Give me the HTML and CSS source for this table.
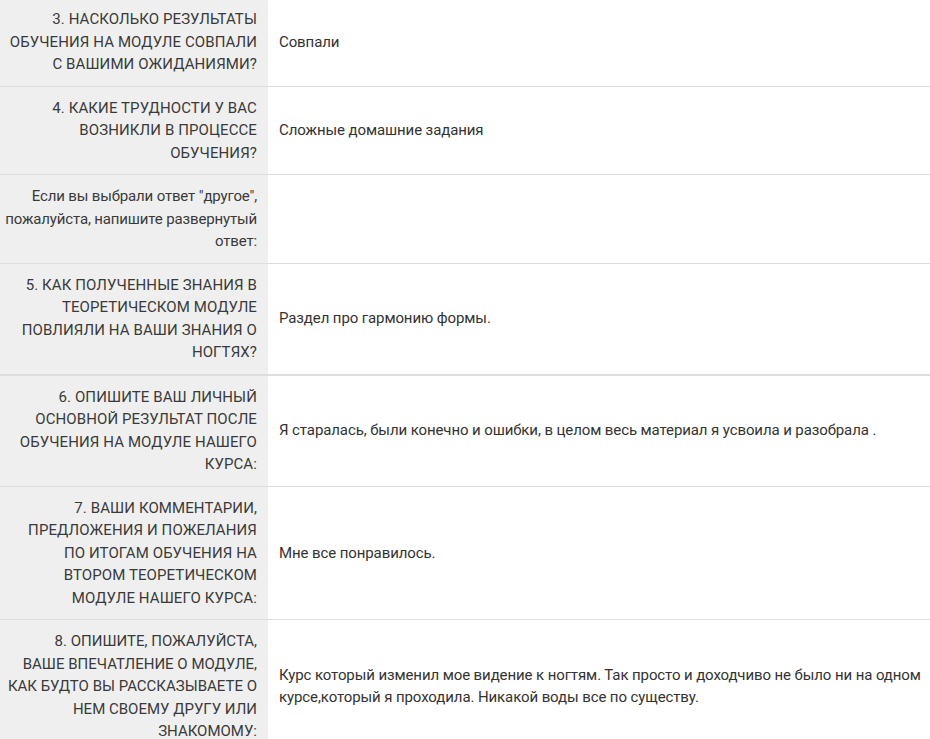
FILE: index.html
```html
<!DOCTYPE html>
<html lang="ru">
<head>
  <meta charset="UTF-8">
  <title>Результаты анкеты</title>
  <link rel="stylesheet" href="styles.css">
</head>
<body>

  <table class="answers">
    <tr>
      <th>3. НАСКОЛЬКО РЕЗУЛЬТАТЫ ОБУЧЕНИЯ НА МОДУЛЕ СОВПАЛИ С ВАШИМИ ОЖИДАНИЯМИ?</th>
      <td>Совпали</td>
    </tr>
    <tr>
      <th>4. КАКИЕ ТРУДНОСТИ У ВАС ВОЗНИКЛИ В ПРОЦЕССЕ ОБУЧЕНИЯ?</th>
      <td>Сложные домашние задания</td>
    </tr>
    <tr>
      <th class="note">Если вы выбрали ответ "другое", пожалуйста, напишите развернутый ответ:</th>
      <td></td>
    </tr>
    <tr class="section-end">
      <th>5. КАК ПОЛУЧЕННЫЕ ЗНАНИЯ В ТЕОРЕТИЧЕСКОМ МОДУЛЕ ПОВЛИЯЛИ НА ВАШИ ЗНАНИЯ О НОГТЯХ?</th>
      <td>Раздел про гармонию формы.</td>
    </tr>
    <tr>
      <th>6. ОПИШИТЕ ВАШ ЛИЧНЫЙ ОСНОВНОЙ РЕЗУЛЬТАТ ПОСЛЕ ОБУЧЕНИЯ НА МОДУЛЕ НАШЕГО КУРСА:</th>
      <td>Я старалась, были конечно и ошибки, в целом весь материал я усвоила и разобрала .</td>
    </tr>
    <tr>
      <th>7. ВАШИ КОММЕНТАРИИ, ПРЕДЛОЖЕНИЯ И ПОЖЕЛАНИЯ ПО ИТОГАМ ОБУЧЕНИЯ НА ВТОРОМ ТЕОРЕТИЧЕСКОМ МОДУЛЕ НАШЕГО КУРСА:</th>
      <td>Мне все понравилось.</td>
    </tr>
    <tr>
      <th class="long">8. ОПИШИТЕ, ПОЖАЛУЙСТА,<br>ВАШЕ ВПЕЧАТЛЕНИЕ О МОДУЛЕ,<br>КАК БУДТО ВЫ РАССКАЗЫВАЕТЕ О НЕМ СВОЕМУ ДРУГУ ИЛИ ЗНАКОМОМУ:</th>
      <td>Курс который изменил мое видение к ногтям. Так просто и доходчиво не было ни на одном курсе,который я проходила. Никакой воды все по существу.</td>
    </tr>
  </table>

</body>
</html>
```

FILE: styles.css
```css
body {
  margin: 0;
  background: #fff;
  font-family: Roboto, Arial, sans-serif;
  font-size: 15px;
  line-height: 1.5;
  color: #333;
}

.answers {
  width: 100%;
  border-collapse: collapse;
  margin-top: -2px;
}

.answers tr {
  border-bottom: 1px solid #dddddd;
}

.answers tr.section-end {
  border-bottom: 2px solid #dddddd;
}

.answers th {
  width: 252px;
  padding: 10px 11px 10px 5px;
  background-color: #efefef;
  text-align: right;
  font-weight: normal;
  letter-spacing: 0.1px;
  color: #3a3a3a;
  vertical-align: middle;
}

.answers th.note {
  letter-spacing: -0.15px;
}

.answers th.long {
  letter-spacing: 0;
}

.answers td {
  padding: 10px 8px 10px 11px;
  letter-spacing: -0.1px;
  vertical-align: middle;
}
```
